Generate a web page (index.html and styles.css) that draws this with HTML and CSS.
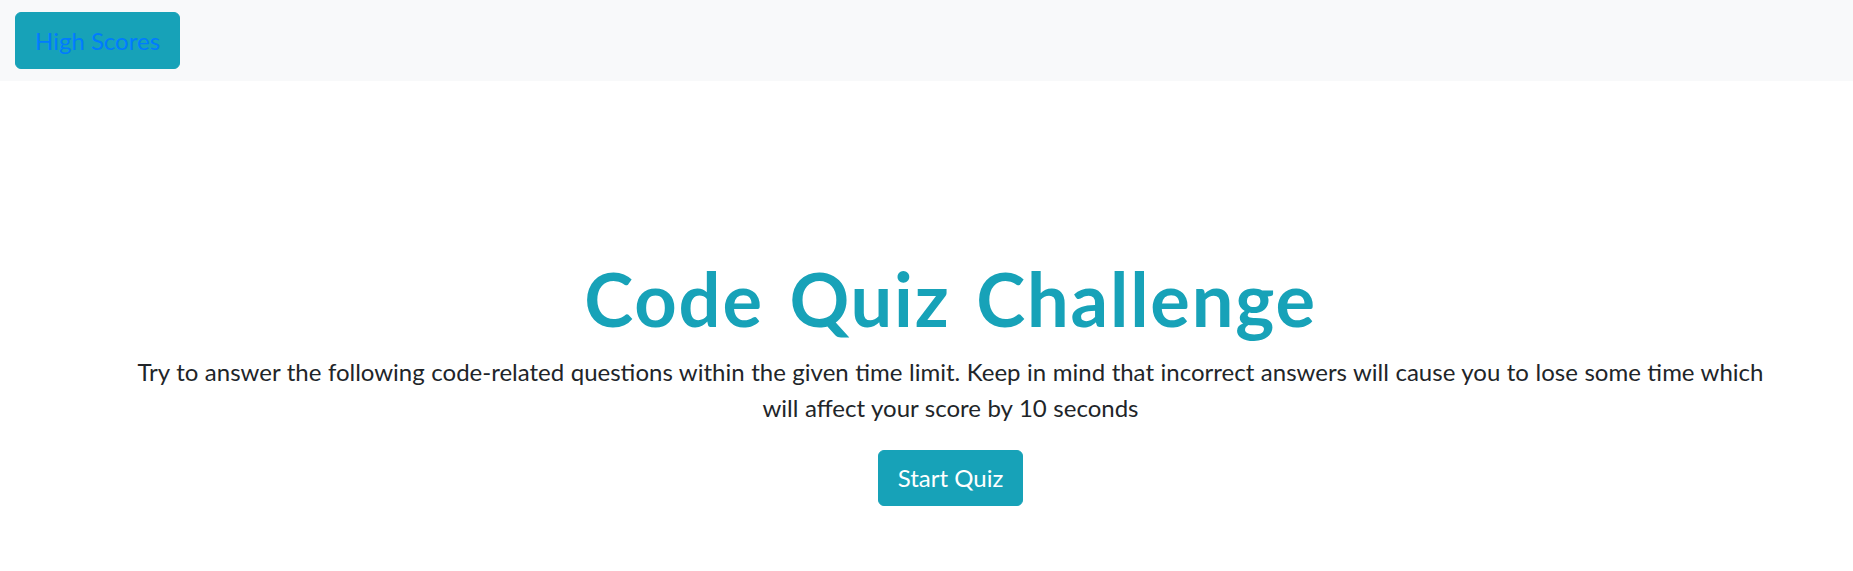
FILE: index.html
```html
<!DOCTYPE html>
<html lang="en">
<head>
<meta charset="utf-8">
<title>Code Quiz Challenge</title>
<link rel="stylesheet" href="styles.css">
</head>
<body>
<nav class="navbar">
  <button class="btn btn-scores" type="button">High Scores</button>
</nav>
<main class="hero">
  <h1 class="hero-title">Code Quiz Challenge</h1>
  <p class="hero-lead">Try to answer the following code-related questions within the given time limit. Keep in mind that incorrect answers will cause you to lose some time which will affect your score by 10 seconds</p>
  <button class="btn btn-start" type="button">Start Quiz</button>
</main>
</body>
</html>
```
FILE: styles.css
```css
* { box-sizing: border-box; }
html, body { margin: 0; padding: 0; background: #ffffff; }
body {
  font-family: Lato, "Open Sans", "Noto Sans", sans-serif;
  color: #212529;
}
.navbar {
  display: flex;
  align-items: center;
  background: #f8f9fa;
  padding: 12px 15px;
  height: 81px;
}
.btn {
  font-family: inherit;
  font-size: 24px;
  line-height: 36px;
  border: 1px solid #17a2b8;
  background: #17a2b8;
  border-radius: 6px;
  cursor: pointer;
}
.btn-scores {
  color: #007bff;
  padding: 9.5px 19px;
}
.hero {
  display: flex;
  flex-direction: column;
  align-items: center;
  text-align: center;
  padding: 174px 24px 0 72px;
}
.hero-title {
  margin: 0;
  font-size: 74px;
  line-height: 1.2;
  font-weight: 700;
  letter-spacing: 1.8px;
  word-spacing: 6px;
  color: #17a2b8;
}
.hero-lead {
  margin: 10.6px 0 0;
  max-width: 1660px;
  font-size: 24px;
  line-height: 36px;
  font-weight: 400;
  word-spacing: 0.4px;
}
.btn-start {
  margin-top: 23.6px;
  color: #ffffff;
  padding: 9px 19px;
}
```
